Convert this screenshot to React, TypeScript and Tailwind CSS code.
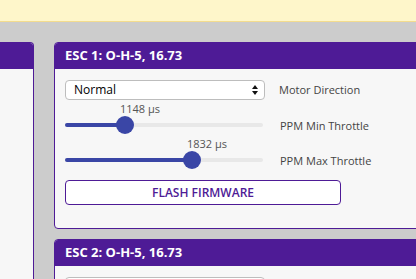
import React from 'react';

const sliders = [
  { value: '1148 µs', pos: 60, label: 'PPM Min Throttle' },
  { value: '1832 µs', pos: 127, label: 'PPM Max Throttle' },
];

function Slider({ value, pos }: { value: string; pos: number }) {
  return (
    <div className="relative h-[32px] w-[198px]">
      <span
        className="absolute top-0 text-[11px] leading-[14px] text-[#555]"
        style={{ left: pos - 5 }}
      >
        {value}
      </span>
      <div className="absolute left-0 right-0 top-[21px] h-[4px] rounded-full bg-[#e8e8e8]" />
      <div
        className="absolute left-0 top-[21px] h-[4px] rounded-full bg-[#3a46a6]"
        style={{ width: pos }}
      />
      <div
        className="absolute top-[14px] h-[18px] w-[18px] rounded-full bg-[#3a46a6]"
        style={{ left: pos - 9 }}
      />
    </div>
  );
}

function EscPanel({ title }: { title: string }) {
  return (
    <div className="w-[400px] shrink-0 overflow-hidden rounded-[4px] border border-[#4e1b96] bg-[#f7f7f7]">
      <div className="flex h-[26px] items-center bg-[#4e1b96] pl-[10px] text-[13px] font-bold text-white">
        {title}
      </div>
      <div className="px-[10px] pb-[23px] pt-[11px]">
        <div className="flex h-[20px] items-center">
          <div className="flex h-[20px] w-[200px] items-center justify-between rounded-[4px] border border-[#bdbdbd] bg-white pl-[8px] pr-[6px]">
            <span className="text-[12px] leading-[14px] text-black">Normal</span>
            <svg width="6" height="10" viewBox="0 0 6 10">
              <path d="M3 0 L6 4 H0 Z M3 10 L6 6 H0 Z" fill="#111" />
            </svg>
          </div>
          <span className="ml-[14px] text-[11px] leading-[14px] text-[#444]">Motor Direction</span>
        </div>
        <div className="mt-[2px] flex flex-col gap-[3px]">
          {sliders.map((s) => (
            <div key={s.label} className="flex items-end">
              <Slider value={s.value} pos={s.pos} />
              <span className="mb-[1px] ml-[17px] text-[11px] leading-[14px] text-[#444]">{s.label}</span>
            </div>
          ))}
        </div>
        <button className="mt-[11px] flex h-[25px] w-[276px] items-center justify-center rounded-[4px] border border-[#4e1b96] bg-white text-[12px] font-semibold text-[#4e1b96]">
          FLASH FIRMWARE
        </button>
      </div>
    </div>
  );
}

export default function App() {
  return (
    <div className="h-[279px] w-[416px] overflow-hidden bg-[#cccccc] font-['Open_Sans',sans-serif]">
      <div className="h-[22px] border-b border-[#f3dc8e] bg-[#fef6ca]" />
      <div className="flex gap-[20px] pt-[20px]">
        <div className="h-[400px] w-[34px] shrink-0 overflow-hidden rounded-tr-[4px] border border-l-0 border-[#4e1b96] bg-[#f7f7f7]">
          <div className="h-[26px] bg-[#4e1b96]" />
        </div>
        <div className="flex flex-col gap-[10px]">
          <EscPanel title="ESC 1: O-H-5, 16.73" />
          <EscPanel title="ESC 2: O-H-5, 16.73" />
        </div>
      </div>
    </div>
  );
}
